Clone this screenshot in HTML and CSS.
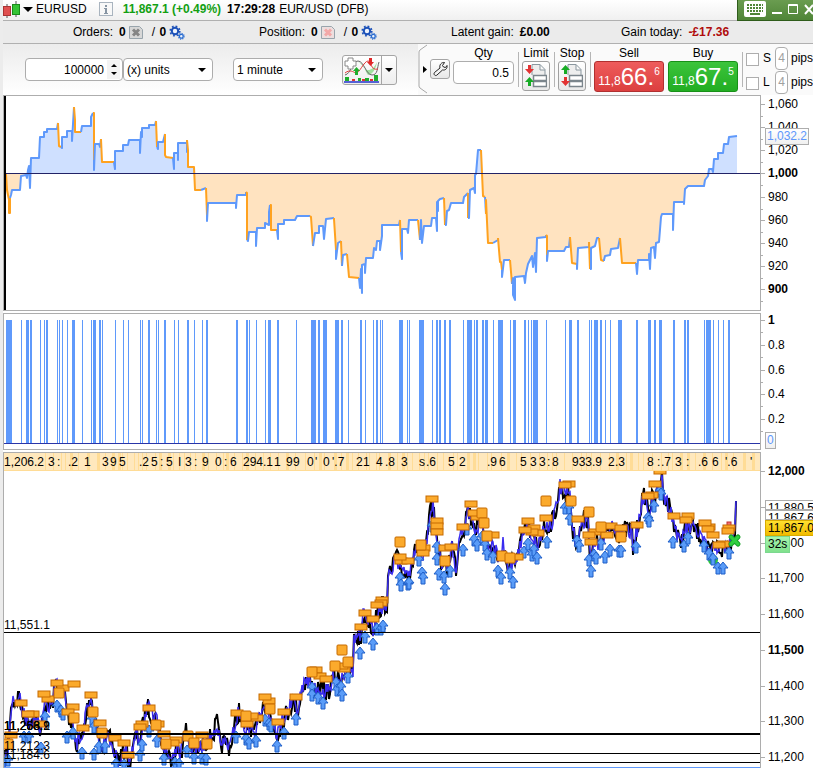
FILE: index.html
```html
<!doctype html>

<html lang="en">
<head>
    <meta charset="utf-8">
    <title>EURUSD</title>
    <link rel="stylesheet" href="styles.css">
</head>

<body>
    <svg class="sprite" aria-hidden="true">
        <symbol id="gears" viewBox="0 0 16 15">
            <circle cx="6" cy="6" r="3.2" fill="#eef3fb" stroke="#1c51b8" stroke-width="2"/>
            <circle cx="6" cy="6" r="4.8" fill="none" stroke="#1c51b8" stroke-width="1.600" stroke-dasharray="1.800 1.970"/>
            <circle cx="12.3" cy="11.3" r="1.9" fill="#eef3fb" stroke="#2a6cd0" stroke-width="1.300"/>
            <circle cx="12.3" cy="11.3" r="2.9" fill="none" stroke="#2a6cd0" stroke-width="1.100" stroke-dasharray="1.100 1.170"/>
        </symbol>
        <symbol id="order-x" viewBox="0 0 14 13">
            <path d="M.5 .5h10l3 3v9H.5z" fill="currentColor" fill-opacity=".2" stroke="#98a4ac"/>
            <path d="M4 3.500l6 6M10 3.500l-6 6" stroke="currentColor" stroke-width="3"/>
        </symbol>
    </svg>

    <header class="title-bar">
        <svg class="candles" width="18" height="17" viewBox="0 0 18 17">
            <path d="M4 3v14M13 0v16" stroke="#555"/>
            <rect x=".5" y="5.500" width="7" height="9" fill="#e05050" stroke="#a33"/>
            <rect x="9.500" y="3.500" width="7" height="10" fill="#35c435" stroke="#1b8a1b"/>
        </svg>
        <button type="button" class="symbol-menu"><i class="triangle"></i>EURUSD</button>
        <button type="button" class="info-button" aria-label="Information">
            <svg width="14" height="14" viewBox="0 0 14 14">
                <rect x=".5" y=".5" width="13" height="13" fill="#f8f8f8" stroke="#a9b4bf"/>
                <path d="M6 3h2v2H6zM5 6h3v5h1v1H5v-1h1V7H5z" fill="#8795a3"/>
            </svg>
        </button>
        <strong class="price-up">11,867.1 (+0.49%)</strong>
        <strong class="clock">17:29:28</strong>
        <span>EUR/USD (DFB)</span>
        <div class="window-buttons">
            <button type="button" aria-label="Keyboard">
                <svg width="22" height="16" viewBox="0 0 22 16">
                    <rect width="22" height="16" rx="2" fill="#fff"/>
                    <path d="M3 4h16M3 7h16M3 10h16" stroke="#4f8537" stroke-width="2" stroke-dasharray="2 1"/>
                    <path d="M6 13h10" stroke="#4f8537" stroke-width="2"/>
                </svg>
            </button>
            <button type="button" aria-label="Minimise">
                <svg width="10" height="12" viewBox="0 0 10 12"><path d="M0 10h10" stroke="#fff" stroke-width="2"/></svg>
            </button>
            <button type="button" aria-label="Maximise">
                <svg width="10" height="12" viewBox="0 0 10 12"><path d="M.5 1.500h9v9h-9zM0 2.500h10" fill="none" stroke="#fff"/></svg>
            </button>
            <button type="button" aria-label="Close">
                <svg width="10" height="12" viewBox="0 0 10 12"><path d="M1 2l8 9M9 2l-8 9" stroke="#fff" stroke-width="2"/></svg>
            </button>
        </div>
    </header>

    <section class="status-bar">
        <div>Orders: <b>0</b> <svg class="gray" width="14" height="13"><use href="#order-x"/></svg><span class="slash">/ <b>0</b></span><svg width="16" height="15"><use href="#gears"/></svg></div>
        <div>Position: <b>0</b> <svg class="pink" width="14" height="13"><use href="#order-x"/></svg><span class="slash">/ <b>0</b></span><svg width="16" height="15"><use href="#gears"/></svg></div>
        <div>Latent gain: <b>£0.00</b></div>
        <div>Gain today: <b class="loss">-£17.36</b></div>
    </section>

    <section class="toolbar">
        <div class="spinner">
            <input type="text" value="100000" aria-label="Units shown">
            <span class="spin-arrows"><i></i><i></i></span>
        </div>
        <div class="drop">
            <select aria-label="Unit"><option>(x) units</option></select>
        </div>
        <div class="drop timeframe">
            <select aria-label="Timeframe"><option>1 minute</option></select>
        </div>
        <div class="indicator">
            <button type="button" aria-label="Add indicator">
                <svg width="38" height="26" viewBox="-1 0 38 26">
                    <path d="M14 5c5 0 7 9 10 13 4 0 8-6 9-13-4 8-7 8-10 8S18 6 14 5z" fill="#9fe09f"/>
                    <path d="M1 18C7 17 8 4 14 4s8 14 14 14 5-7 7-13" fill="none" stroke="#666"/>
                    <path d="M1 16c5-4 8-1 11 0S20 4 24 4s2 10 10 8" fill="none" stroke="#e03c3c"/>
                    <path d="M4 1h5v3h3v5H9v3H4V9H1V4h3z" fill="#fff" stroke="#888"/>
                    <path d="M25 1h3v4h2l-3.500 4L23 5h2z" fill="#e02828"/>
                    <path d="M11 18v-4H9l3.500-4 3.500 4h-2v4z" fill="#1fae2c"/>
                    <path d="M1 20h4v4H1zM14 21h3v3h-3zM21 21h4v3h-4zM30 18h4v6h-4z" fill="#1fae2c"/>
                    <path d="M8 22h3v2H8zM18 22h3v2h-3zM26 22h3v2h-3z" fill="#d33"/>
                    <path d="M0 25h35" stroke="#2233cc" stroke-width="1.500"/>
                </svg>
            </button>
            <button type="button" class="indicator-menu" aria-label="Indicator menu"><i class="triangle"></i></button>
        </div>

        <div class="order-panel">
            <svg class="bracket" width="12" height="50" viewBox="0 0 12 50">
                <path d="M9 1L2 6q-1 1-1 2v34q0 1 1 2l7 5" fill="none" stroke="#a8a8a8"/>
                <path d="M5 22v7l4-3.500z"/>
            </svg>
            <button type="button" class="wrench" aria-label="Order settings">
                <svg width="16" height="16" viewBox="0 0 16 16">
                    <path d="M12.500 1.500l-2 3 1 1.500 2 .500 1.500-2c.500 3-1.500 5-4.500 4.500L5 14c-1.500 1.500-4-.5-2.500-2.500L8 7c-1-3 1.500-6 4.500-5.500z" fill="#f4f4f4" stroke="#222"/>
                </svg>
            </button>
            <label class="field qty">Qty
                <input type="text" value="0.5">
            </label>
            <div class="field divided">
                <label for="limit">Limit</label>
                <button type="button" class="order-type" id="limit">
                    <svg width="22" height="24" viewBox="0 0 22 24">
                        <path d="M7 11V.500h8l5 5V11M15 .500V6h5" fill="#eee" stroke="#8a979f"/>
                        <path d="M8.500 11.500h13v5h-13zM8.500 17.500h13v5h-13z" fill="#fff" stroke="#7b858c" stroke-width="1.500"/>
                        <path d="M3 1h3v4h3l-4.500 5L0 5h3z" fill="#e23333"/>
                        <path d="M3 22v-4H0l4.500-5L9 18H6v4z" fill="#17ab25"/>
                    </svg>
                </button>
            </div>
            <div class="field divided">
                <label for="stop">Stop</label>
                <button type="button" class="order-type" id="stop">
                    <svg width="22" height="24" viewBox="0 0 22 24">
                        <path d="M7 11V.500h8l5 5V11M15 .500V6h5" fill="#eee" stroke="#8a979f"/>
                        <path d="M8.500 11.500h13v5h-13zM8.500 17.500h13v5h-13z" fill="#fff" stroke="#7b858c" stroke-width="1.500"/>
                        <path d="M3 10V6H0l4.500-5L9 6H6v4z" fill="#17ab25"/>
                        <path d="M3 13h3v4h3l-4.500 5L0 17h3z" fill="#e23333"/>
                    </svg>
                </button>
            </div>
            <div class="field divided">
                <label for="sell">Sell</label>
                <button type="button" class="deal sell" id="sell">11,8<span>66.</span><sup>6</sup></button>
            </div>
            <div class="field">
                <label for="buy">Buy</label>
                <button type="button" class="deal buy" id="buy">11,8<span>67.</span><sup>5</sup></button>
            </div>
            <div class="pips divided">
                <div class="pips-row">
                    <input type="checkbox" id="s-on"><label for="s-on">S</label>
                    <input type="text" id="s-pips" value="4"><label for="s-pips">pips</label>
                </div>
                <div class="pips-row">
                    <input type="checkbox" id="l-on"><label for="l-on">L</label>
                    <input type="text" id="l-pips" value="4"><label for="l-pips">pips</label>
                </div>
            </div>
        </div>
    </section>

    <main>
        <section class="panel">
            <svg class="plot" id="equity" viewBox="4 96 757 214"></svg>
            <div class="axis equity-axis">
                <ul>
                    <li>1,060</li>
                    <li>1,040</li>
                    <li>1,020</li>
                    <li><b>1,000</b></li>
                    <li>980</li>
                    <li>960</li>
                    <li>940</li>
                    <li>920</li>
                    <li><b>900</b></li>
                </ul>
                <span class="tag equity-tag">1,032.2</span>
            </div>
        </section>

        <section class="panel">
            <svg class="plot" id="signal" viewBox="4 314 757 135"></svg>
            <div class="axis signal-axis">
                <ul>
                    <li><b>1</b></li>
                    <li>0.8</li>
                    <li>0.6</li>
                    <li>0.4</li>
                    <li>0.2</li>
                </ul>
                <span class="tag signal-tag">0</span>
            </div>
        </section>

        <section class="panel price-panel">
            <svg class="plot" id="price" viewBox="4 453 757 315"></svg>
            <div class="axis price-axis">
                <ul>
                    <li><b>12,000</b></li>
                    <li>11,900</li>
                    <li>11,800</li>
                    <li>11,700</li>
                    <li>11,600</li>
                    <li><b>11,500</b></li>
                    <li>11,400</li>
                    <li>11,300</li>
                    <li>11,200</li>
                </ul>
                <div class="quotes">
                    <span class="quote">11,880.5</span>
                    <span class="quote">11,867.6</span>
                    <span class="quote last">11,867.0</span>
                    <span class="quote timer">32s</span>
                </div>
            </div>
        </section>
    </main>

    <script src="charts.js"></script>
</body>
</html>
```
FILE: styles.css
```css
* {
    box-sizing: border-box;
}

body {
    margin: 0;
    padding-left: 3px;
    background-color: #ececec;
    color: #000000;
    font-family: "Liberation Sans", Arial, sans-serif;
    font-size: 12px;
    overflow-x: hidden;
}

button, input, select {
    font: inherit;
    color: inherit;
    margin: 0;
    padding: 0;
}

button {
    border: none;
    background: none;
}

svg {
    flex: none;
    display: block;
}

.sprite {
    position: absolute;
    width: 0;
    height: 0;
}

.triangle {
    width: 0;
    height: 0;
    border: 4px solid transparent;
    border-top-color: #000000;
    border-bottom: none;
}

/* title bar */

.title-bar {
    display: flex;
    align-items: center;
    height: 21px;
    padding-bottom: 2px;
    border-bottom: 1px solid #b0b0b0;
    background: linear-gradient(#ffffff, #f0f0f0);
    white-space: nowrap;
}

.symbol-menu {
    display: flex;
    align-items: center;
    gap: 3px;
    padding-left: 2px;
}

.symbol-menu .triangle {
    border-width: 5px 5px 0 5px;
}

.info-button {
    margin: 0 10px 0 12px;
}

.price-up {
    color: #12a012;
}

.clock {
    margin: 0 4px 0 6px;
}

.window-buttons {
    display: flex;
    align-items: center;
    align-self: flex-start;
    gap: 6px;
    height: 21px;
    flex: none;
    width: 76px;
    margin-left: auto;
    padding: 0 0 3px 6px;
    border-left: 1px solid #2f5c1b;
    border-bottom: 1px solid #2f5c1b;
    background: linear-gradient(#6a9c50, #4f8537);
    overflow: hidden;
}

/* status bar */

.status-bar {
    display: grid;
    grid-template-columns: 186fr 192fr 170fr 192fr;
    align-items: center;
    height: 23px;
    padding-left: 70px;
    border-bottom: 1px solid #b0b0b0;
    background-color: #ebebeb;
}

.status-bar div {
    display: flex;
    align-items: center;
    gap: 3px;
    white-space: nowrap;
}

.status-bar b {
    margin-left: 3px;
}

.slash {
    padding-left: 6px;
}

.slash b {
    margin-left: 1px;
}

.gray {
    color: #858585;
}

.pink {
    color: #f3a8a8;
}

.status-bar .loss {
    color: #b00c0c;
}

/* toolbar */

.toolbar {
    display: flex;
    align-items: center;
    height: 51px;
    padding-left: 22px;
    background: linear-gradient(#ececec, #ffffff);
}

.spinner, .drop {
    position: relative;
    width: 98px;
    height: 23px;
}

.drop {
    width: 90px;
}

.timeframe {
    margin-left: 20px;
}

.spinner input, .drop select, .qty input {
    appearance: none;
    display: block;
    width: 100%;
    height: 23px;
    border: 1px solid #adadad;
    border-radius: 4px;
    background-color: #ffffff;
}

.spinner input {
    padding-right: 18px;
    text-align: right;
}

.drop select {
    padding-left: 3px;
}

.drop::after {
    content: "";
    position: absolute;
    top: 10px;
    right: 7px;
    border: 4px solid transparent;
    border-top-color: #000000;
    border-bottom: none;
}

.spin-arrows {
    position: absolute;
    top: 2px;
    right: 3px;
    display: flex;
    flex-direction: column;
    justify-content: center;
    align-items: center;
    gap: 5px;
    width: 13px;
    height: 19px;
    background-color: #f3f3f3;
}

.spin-arrows i {
    border: 3px solid transparent;
    border-bottom-color: #000000;
    border-top: none;
}

.spin-arrows i + i {
    border-top: 3px solid #000000;
    border-bottom: none;
}

.indicator {
    display: flex;
    margin-left: 19px;
    height: 30px;
    border: 1px solid #a5a5a5;
    border-radius: 3px;
    background: linear-gradient(#ffffff, #eeeeee);
}

.indicator-menu {
    display: flex;
    align-items: center;
    padding: 0 3px;
    border-left: 1px solid #a5a5a5;
}

.order-panel {
    display: flex;
    align-items: flex-start;
    margin-left: auto;
    height: 51px;
    background-color: #fafafa;
}

.wrench {
    display: flex;
    align-items: center;
    justify-content: center;
    width: 20px;
    height: 20px;
    margin: 15px 3px 0 0;
    border: 1px solid #a5a5a5;
    border-radius: 3px;
    background: linear-gradient(#ffffff, #e8e8e8);
}

.field {
    display: flex;
    flex-direction: column;
    align-items: center;
    gap: 1px;
    padding: 2px 4px 0 0;
    text-align: center;
    line-height: 14px;
}

.divided {
    background: linear-gradient(#b5b5b5, #b5b5b5) 0 8px / 1px 35px no-repeat;
    padding-left: 4px;
}

.qty input {
    width: 61px;
    padding-right: 4px;
    text-align: right;
}

.order-type {
    display: flex;
    align-items: center;
    justify-content: center;
    width: 28px;
    height: 30px;
    border: 1px solid #a0a0a0;
    border-radius: 3px;
    background: linear-gradient(#ffffff, #e9e9e9);
}

.deal {
    display: flex;
    align-items: baseline;
    justify-content: center;
    width: 70px;
    height: 31px;
    padding-top: 6px;
    border: 1px solid #b03030;
    border-radius: 3px;
    color: #ffffff;
    line-height: 18px;
}

.deal span {
    font-size: 24px;
}

.deal sup {
    align-self: flex-start;
    line-height: 8px;
}

.sell {
    background: linear-gradient(#ee5c5c, #dc3f3f);
}

.buy {
    border-color: #189018;
    background: linear-gradient(#3cc43c, #22ad22);
}

.pips {
    padding: 2px 0 0 4px;
}

.pips-row {
    display: flex;
    align-items: center;
    height: 24px;
}

.pips-row input[type="checkbox"] {
    appearance: none;
    width: 13px;
    height: 13px;
    margin: 3px 4px 0 0;
    border: 1px solid #adadad;
    background-color: #ffffff;
}

.pips-row input[type="checkbox"] + label {
    width: 12px;
}

.pips-row input[type="text"] {
    width: 13px;
    height: 23px;
    margin-right: 3px;
    border: 1px solid #adadad;
    border-radius: 4px;
    background-color: #ffffff;
    color: #a0a0a0;
    text-align: center;
}

/* charts */

main {
    display: grid;
    gap: 2px;
    background-color: #ffffff;
}

.panel {
    display: grid;
    grid-template-columns: 1fr 52px;
    border-left: 1px solid #adadad;
}

.plot {
    width: 100%;
    height: auto;
    box-sizing: content-box;
    border: 1px solid #adadad;
    border-width: 1px 0;
    background-color: #ffffff;
    font-size: 12px;
}

.price-panel {
    overflow: hidden;
}

.price-panel .plot {
    border-bottom: none;
}

.axis {
    position: relative;
    display: flex;
    border-left: 1px solid #adadad;
    margin-left: -1px;
    background-color: #ffffff;
}

.axis ul {
    display: flex;
    flex-direction: column;
    justify-content: space-between;
    flex: 1;
    margin: 0;
    padding: 0;
    list-style: none;
}

.equity-axis ul {
    padding: 2px 0 15px;
}

.signal-axis ul {
    padding: 0 0 24px;
}

.price-axis ul {
    padding: 12px 0 4px;
}

.axis li {
    position: relative;
    height: 14px;
    padding-left: 7px;
    line-height: 14px;
}

/* main tick, then the half-way tick below it */
.axis li::before, .axis li::after {
    content: "";
    position: absolute;
    left: 0;
    top: 7px;
    width: 4px;
    border-top: 1px solid #adadad;
}

.axis li::after {
    top: 19px;
    width: 2px;
}

.price-axis li::after {
    display: none;
}

.tag {
    position: absolute;
    left: 4px;
    padding: 0 1px;
    border: 1px solid #adadad;
    background: linear-gradient(#ffffff, #f0f0f0);
    color: #5d97fb;
    line-height: 15px;
}

.equity-tag {
    top: 33px;
}

.signal-tag {
    top: 119px;
}

.quotes {
    position: absolute;
    top: 48px;
    left: 4px;
    right: 0;
    display: flex;
    flex-direction: column;
    align-items: flex-start;
    overflow: hidden;
}

.quote {
    width: 60px;
    height: 10px;
    padding-left: 2px;
    border: 1px solid #adadad;
    background-color: #ffffff;
    line-height: 14px;
    overflow: hidden;
}

.last {
    height: 16px;
    border-color: #d8aa00;
    background: linear-gradient(#ffe030, #f2bc00);
}

.timer {
    width: 25px;
    height: 17px;
    border-color: #7cd890;
    background: linear-gradient(#a8f5b0, #80e08c);
    line-height: 15px;
}
```
FILE: charts.js
```js
const make = (parent, tag, attrs, text) => {
    const el = document.createElementNS('http://www.w3.org/2000/svg', tag)
    for (const key in attrs) el.setAttribute(key, attrs[key])
    if (text) el.textContent = text
    parent.appendChild(el)
    return el
}

// repeatable noise, so the chart looks the same on each load
let seed = 7
const noise = () => {
    seed = (seed * 16807) % 2147483647
    return seed / 2147483647 - 0.5
}

const pairs = text => text.trim().split(/\s+/).map(p => p.split(',').map(Number))

// equity curve: u = gaining run, d = losing run
const equityRuns = [
    ['d', '6,174 7,190 9,200 9,213 10,213 10,198'],
    ['u', '11,195 12,190 20,190 21,176 26,175 27,178 28,170 29,166 30,188 31,158 39,158 40,137 44,137 44,132 47,132 47,129 57,129 58,123'],
    ['d', '58,123 59,146 61,147'],
    ['u', '62,148 62,137 67,137 67,131 72,131 72,141 74,107'],
    ['d', '74,107 75,120 75,132 81,132'],
    ['u', '82,126 91,126 91,117 93,113'],
    ['d', '94,113 94,160'],
    ['u', '94,170 95,144 99,144 100,147 101,139'],
    ['d', '101,139 102,162 114,162'],
    ['u', '115,169 115,151 123,151 123,145 128,145 129,140 140,140 140,153 141,132 142,137 142,128 149,128 149,125 155,125 156,121'],
    ['d', '156,121 157,147'],
    ['u', '158,149 158,142 163,142 165,134'],
    ['d', '165,134 165,155 166,157 173,158'],
    ['u', '174,169 174,153 178,153 178,160 178,143 187,143 187,152 187,140'],
    ['d', '188,150 188,167 194,167 195,190 201,190'],
    ['u', '201,190 206,188'],
    ['d', '206,188 207,215'],
    ['u', '207,221 208,203 236,203 236,208 237,195 246,195 246,192'],
    ['d', '247,193 247,240'],
    ['u', '248,241 249,232 256,232 256,246 257,228 265,228 265,223 269,225 269,212 270,205'],
    ['d', '271,205 271,230 277,230'],
    ['u', '278,239 278,224 284,224 284,220 295,220 297,216 310,216'],
    ['d', '311,217 313,246'],
    ['u', '313,246 315,233 319,233 319,226 323,226 324,239 326,219 334,218'],
    ['d', '334,219 336,250'],
    ['u', '336,259 338,243 341,241'],
    ['d', '341,241 342,266'],
    ['u', '342,266 343,255 347,254'],
    ['d', '347,254 349,277 359,278'],
    ['u', '360,288 361,269 362,293 362,265 365,264 365,273 366,258 373,258 374,248 376,250 377,241 380,241 380,250 382,236 382,225 399,225 400,220'],
    ['d', '400,220 401,252'],
    ['u', '402,259 402,229 407,229 408,233 409,220 418,220'],
    ['d', '418,220 420,240'],
    ['u', '421,220 422,243 424,226 431,226 432,218 436,218 437,231 437,202 438,211 438,201 440,199 444,198'],
    ['d', '444,198 445,225'],
    ['u', '446,225 447,211 449,210 451,203 463,203 464,197 468,193'],
    ['d', '468,193 468,218'],
    ['u', '469,218 470,190 474,188 475,193 475,175 476,174 478,150 481,150'],
    ['d', '481,150 483,196 485,197'],
    ['u', '485,197 486,214'],
    ['d', '486,200 488,243 493,243'],
    ['u', '493,243 498,240 498,238'],
    ['d', '498,238 500,262 501,262 502,270'],
    ['u', '502,277 504,260 510,260'],
    ['d', '510,260 512,284'],
    ['u', '513,278 513,295 515,300 515,277 524,276 525,283 526,273 528,264 532,256 533,267 535,253 536,272 537,238 546,237 546,235'],
    ['d', '547,236 547,255'],
    ['u', '547,261 548,251 564,251 566,247 569,247 570,237'],
    ['d', '570,237 572,263 577,264'],
    ['u', '577,269 578,248 589,247 589,242'],
    ['d', '589,242 590,269'],
    ['u', '591,269 591,248 595,246 597,238 599,238'],
    ['d', '599,238 601,260 604,261'],
    ['u', '604,260 605,256 610,255 611,249 618,248 620,238'],
    ['d', '620,238 622,263 636,263'],
    ['u', '637,274 638,260 649,260 649,254 650,269 651,248 654,247 655,258 656,243 659,242 661,217 662,214 673,214 673,230 674,202 684,202 684,204 685,189 688,186 704,186 705,180 708,176 709,169 712,169 713,172 714,159 718,159 718,153 723,153 724,144 728,144 729,137 737,136']
]

const equity = document.querySelector('#equity')
const defs = make(equity, 'defs', {})
make(make(defs, 'clipPath', { id: 'above' }), 'rect', { x: 4, y: 96, width: 757, height: 77 })
make(make(defs, 'clipPath', { id: 'below' }), 'rect', { x: 4, y: 174, width: 757, height: 136 })
const outline = '6,174 ' + equityRuns.map(r => r[1]).join(' ') + ' 737,174'
make(equity, 'polygon', { points: outline, fill: '#cfe0ff', 'clip-path': 'url(#above)' })
make(equity, 'polygon', { points: outline, fill: '#ffe3c0', 'clip-path': 'url(#below)' })
let lastPoint = ''
for (const [kind, points] of equityRuns) {
    make(equity, 'polyline', {
        points: lastPoint + ' ' + points,
        fill: 'none',
        stroke: kind === 'u' ? '#5f99fb' : '#ffa21f',
        'stroke-width': 2,
        'stroke-linejoin': 'round'
    })
    lastPoint = points.split(' ').pop()
}
make(equity, 'rect', { x: 4, y: 173, width: 757, height: 1, fill: '#222266' })
make(equity, 'rect', { x: 4, y: 96, width: 2, height: 214, fill: '#000' })

// signal bars: x,width
const signalBars = pairs(`
    6,6 21,1 26,3 30,2 40,1 44,1 46,2 57,1 59,1 62,1 67,1 72,3 82,1 91,1 93,3 99,2 102,1 115,1 123,1 128,1
    140,1 142,1 148,2 156,1 158,1 164,2 174,1 178,1 187,2 194,1 202,1 206,2 236,2 246,2 249,1 256,1 265,1
    268,3 277,2 296,1 311,5 318,2 323,4 335,4 341,2 348,1 360,2 365,1 373,1 376,2 380,1 382,1 399,4 407,1
    409,1 419,5 432,1 436,2 439,2 444,2 449,2 463,1 467,5 474,1 476,2 482,2 485,3 493,1 498,5 510,1 513,3
    524,2 528,1 531,1 533,5 546,1 565,1 569,3 577,2 589,1 591,1 594,4 600,2 605,1 610,1 618,4 636,2 648,3
    654,2 659,3 673,2 684,2 687,2 704,1 706,5 713,1 718,1 723,1 728,2`)

const signal = document.querySelector('#signal')
for (const [x, width] of signalBars) {
    make(signal, 'rect', { x, y: 320, width, height: 123, fill: '#5f99fb' })
}
make(signal, 'rect', { x: 4, y: 443, width: 757, height: 1, fill: '#2a35a8' })

// price path
const pricePoints = pairs(`
    5,760 8,745 12,700 15,702 19,695 22,712 28,722 33,718 38,722 40,740 42,722 45,703 50,708 53,700 56,682
    58,690 62,688 65,695 68,715 72,722 76,745 80,738 83,735 86,712 91,706 95,720 99,740 104,745 108,738
    112,742 117,762 122,755 126,750 129,765 133,750 136,735 140,740 144,720 147,706 152,715 157,722 161,735
    164,750 170,758 176,750 181,752 186,730 190,745 196,752 203,745 208,740 213,735 217,722 220,745 226,742
    230,748 235,725 239,710 245,730 250,725 255,735 260,715 264,700 270,715 277,735 282,720 288,712 292,702
    298,710 303,685 308,680 314,690 320,690 325,692 330,690 334,675 340,680 345,670 350,672 353,670 354,640
    358,636 361,640 363,615 368,620 373,630 377,612 383,605 387,603 388,580 392,570 395,555 400,565 404,575
    410,570 413,560 417,545 422,560 426,545 430,515 433,507 436,535 441,560 447,570 452,545 456,568 460,535
    465,525 467,507 472,520 477,530 482,520 487,548 493,548 500,560 503,545 508,570 513,560 518,555 523,535
    528,525 533,540 538,545 543,530 547,525 552,522 557,505 560,487 564,493 570,495 573,535 578,540 583,520
    588,518 590,555 595,545 602,540 610,530 615,528 620,535 626,530 632,530 633,550 638,525 641,505 645,495
    649,510 652,500 656,500 659,478 662,478 665,500 669,505 672,515 676,530 680,545 684,530 690,528 695,530
    700,535 705,545 710,555 716,545 722,550 728,545 733,540 735,530 736,503`)

const price = document.querySelector('#price')
const priceLine = spread => {
    const out = []
    for (let i = 1; i < pricePoints.length; i++) {
        const [x0, y0] = pricePoints[i - 1]
        const [x1, y1] = pricePoints[i]
        for (let x = x0; x < x1; x++) {
            const y = y0 + (y1 - y0) * (x - x0) / (x1 - x0)
            out.push(x + ',' + Math.round(y + noise() * spread))
        }
    }
    out.push('736,501')
    return out.join(' ')
}
make(price, 'polyline', { points: priceLine(20), fill: 'none', stroke: '#000', 'stroke-width': 2 })
make(price, 'polyline', { points: priceLine(16), fill: 'none', stroke: '#3a2cf0', 'stroke-width': 1.500 })

const arrows = pairs(`
    3,762 8,760 24,737 29,737 41,748 45,717 57,706 61,711 63,714 67,737 73,733 82,753 92,719 94,727 94,754
    99,747 105,747 116,764 124,765 140,755 142,745 149,731 157,741 164,759 175,763 179,764 187,751 194,758
    202,758 206,759 236,737 246,739 249,743 256,741 265,720 269,724 271,726 277,746 284,733 296,719 312,688
    312,695 318,698 323,703 336,683 337,690 341,687 342,695 348,677 360,653 365,637 373,644 377,629 381,629
    383,626 400,578 401,585 408,584 409,583 419,560 422,573 423,578 432,526 437,547 437,559 439,574 444,577
    445,589 450,571 463,550 467,529 474,540 477,545 482,537 485,545 487,554 493,557 498,571 501,578 510,573
    513,582 524,552 528,544 532,555 534,550 537,558 547,542 565,508 569,508 570,519 577,541 579,546 589,560
    591,571 594,555 596,558 601,544 605,557 610,550 619,551 621,551 636,547 648,518 649,521 654,506 660,491
    661,494 673,542 684,546 688,538 704,546 709,554 713,559 718,568 723,568 729,553`)

const flatBoxes = pairs(`
    21,703 11,735 33,714 28,714 40,724 48,699 44,694 63,688 57,683 74,684 91,695 73,707 68,712 83,728 100,723
    115,738 124,743 128,755 149,708 142,724 140,727 158,724 164,734 176,740 173,743 202,735 237,713 247,724
    257,718 252,716 269,701 265,697 278,722 284,712 296,697 316,670 320,676 326,679 344,669 342,666 361,627
    365,613 373,619 382,600 381,603 377,605 401,561 408,561 400,557 424,548 423,553 432,499 437,521 437,526
    437,532 445,548 451,547 463,527 471,504 477,517 474,513 493,535 517,557 528,521 534,528 538,533 532,532
    525,530 546,518 569,484 565,485 578,519 595,532 607,535 589,535 591,542 611,526 621,528 637,525 652,495
    648,496 655,484 660,471 674,516 688,516 686,520 709,527 705,523 708,529 713,535 723,544 719,545 729,528
    728,531`)

const tallBoxes = pairs(`
    8,744 59,693 74,718 93,712 102,733 156,725 166,744 188,736 194,743 207,744 246,716 270,709 312,672
    335,666 342,650 348,662 400,542 421,545 445,561 482,513 484,523 487,536 502,556 510,558 546,501 571,501
    589,512 601,527 621,537`)

const box = (x, y, w, h) => make(price, 'rect', {
    x: x - w / 2, y: y - h / 2, width: w, height: h, rx: h > 6 ? 1 : 0, fill: '#fbaa2c', stroke: '#c66a00'
})

make(price, 'circle', { cx: 713, cy: 560, r: 5, fill: '#2fc540' })
for (const [x, y] of arrows) {
    make(price, 'path', {
        d: `M${x} ${y - 6}l5 6h-3v6h-4v-6h-3z`, fill: '#5a9cf8', stroke: '#1f5fc8'
    })
}
make(price, 'rect', { x: 727, y: 522, width: 4, height: 5, fill: '#f07070', stroke: '#c03030' })
flatBoxes.forEach(([x, y]) => box(x, y, 12, 6))
tallBoxes.forEach(([x, y]) => box(x, y, 10, 10))
make(price, 'path', { d: 'M731 537l7 7M738 537l-7 7', stroke: '#18a028', 'stroke-width': 5, 'stroke-linecap': 'round' })
make(price, 'path', { d: 'M731 537l7 7M738 537l-7 7', stroke: '#2fd040', 'stroke-width': 3, 'stroke-linecap': 'round' })

// pivot levels
const levels = [
    [632, 1, '#000', ['11,551.1']],
    [733, 2, '#000', ['11,268.2', '11,253.9', '11,266.1']],
    [753, 1, '#000', ['11,212.3']],
    [762, 1, '#000', ['11,184.6']],
    [767, 1, '#5f99fb', []]
]
for (const [y, height, fill, labels] of levels) {
    make(price, 'rect', { x: 4, y, width: 757, height, fill })
    labels.forEach(label => make(price, 'text', { x: 4, y: y - 3 }, label))
}

// strip of overlapping level labels along the top
make(price, 'rect', { x: 4, y: 453, width: 757, height: 18, fill: '#ffe8bd' })
for (let x = 45; x < 756; x += 3 + Math.round((noise() + 0.5) * 7)) {
    make(price, 'rect', { x, y: 453, width: noise() > 0.3 ? 3 : 1, height: 18, fill: '#ffdc96' })
}
make(price, 'rect', { x: 4, y: 470, width: 757, height: 1, fill: '#ffdc96' })
const stripLabels = [
    [4, '1,206.2'], [48, '3'], [57, ':'], [68, '.2'], [84, '1'], [102, '3'], [110, '9'], [119, '5'], [139, '.2'],
    [151, '5'], [160, ':'], [166, '5'], [178, 'I'], [185, '3'], [194, ':'], [202, '9'], [215, '0'], [224, ':'],
    [230, '6'], [243, '294.1'], [274, '1'], [286, '9'], [293, '9'], [307, '0'], [315, '\''], [323, '0'],
    [332, '\'.7'], [356, '2'], [363, '1'], [376, '4'], [385, '.8'], [401, '3'], [419, 's'], [426, '.6'],
    [448, '5'], [459, '2'], [487, '.9'], [499, '6'], [520, '5'], [530, '3'], [539, '3'], [547, ':'], [552, '8'],
    [572, '933.9'], [608, '2'], [615, '.3'], [647, '8'], [657, ':'], [661, '.7'], [675, '3'], [686, ':'],
    [698, '.6'], [712, '6'], [725, '\'.6'], [750, '\'']
]
stripLabels.forEach(([x, label]) => make(price, 'text', { x, y: 466 }, label))
```
